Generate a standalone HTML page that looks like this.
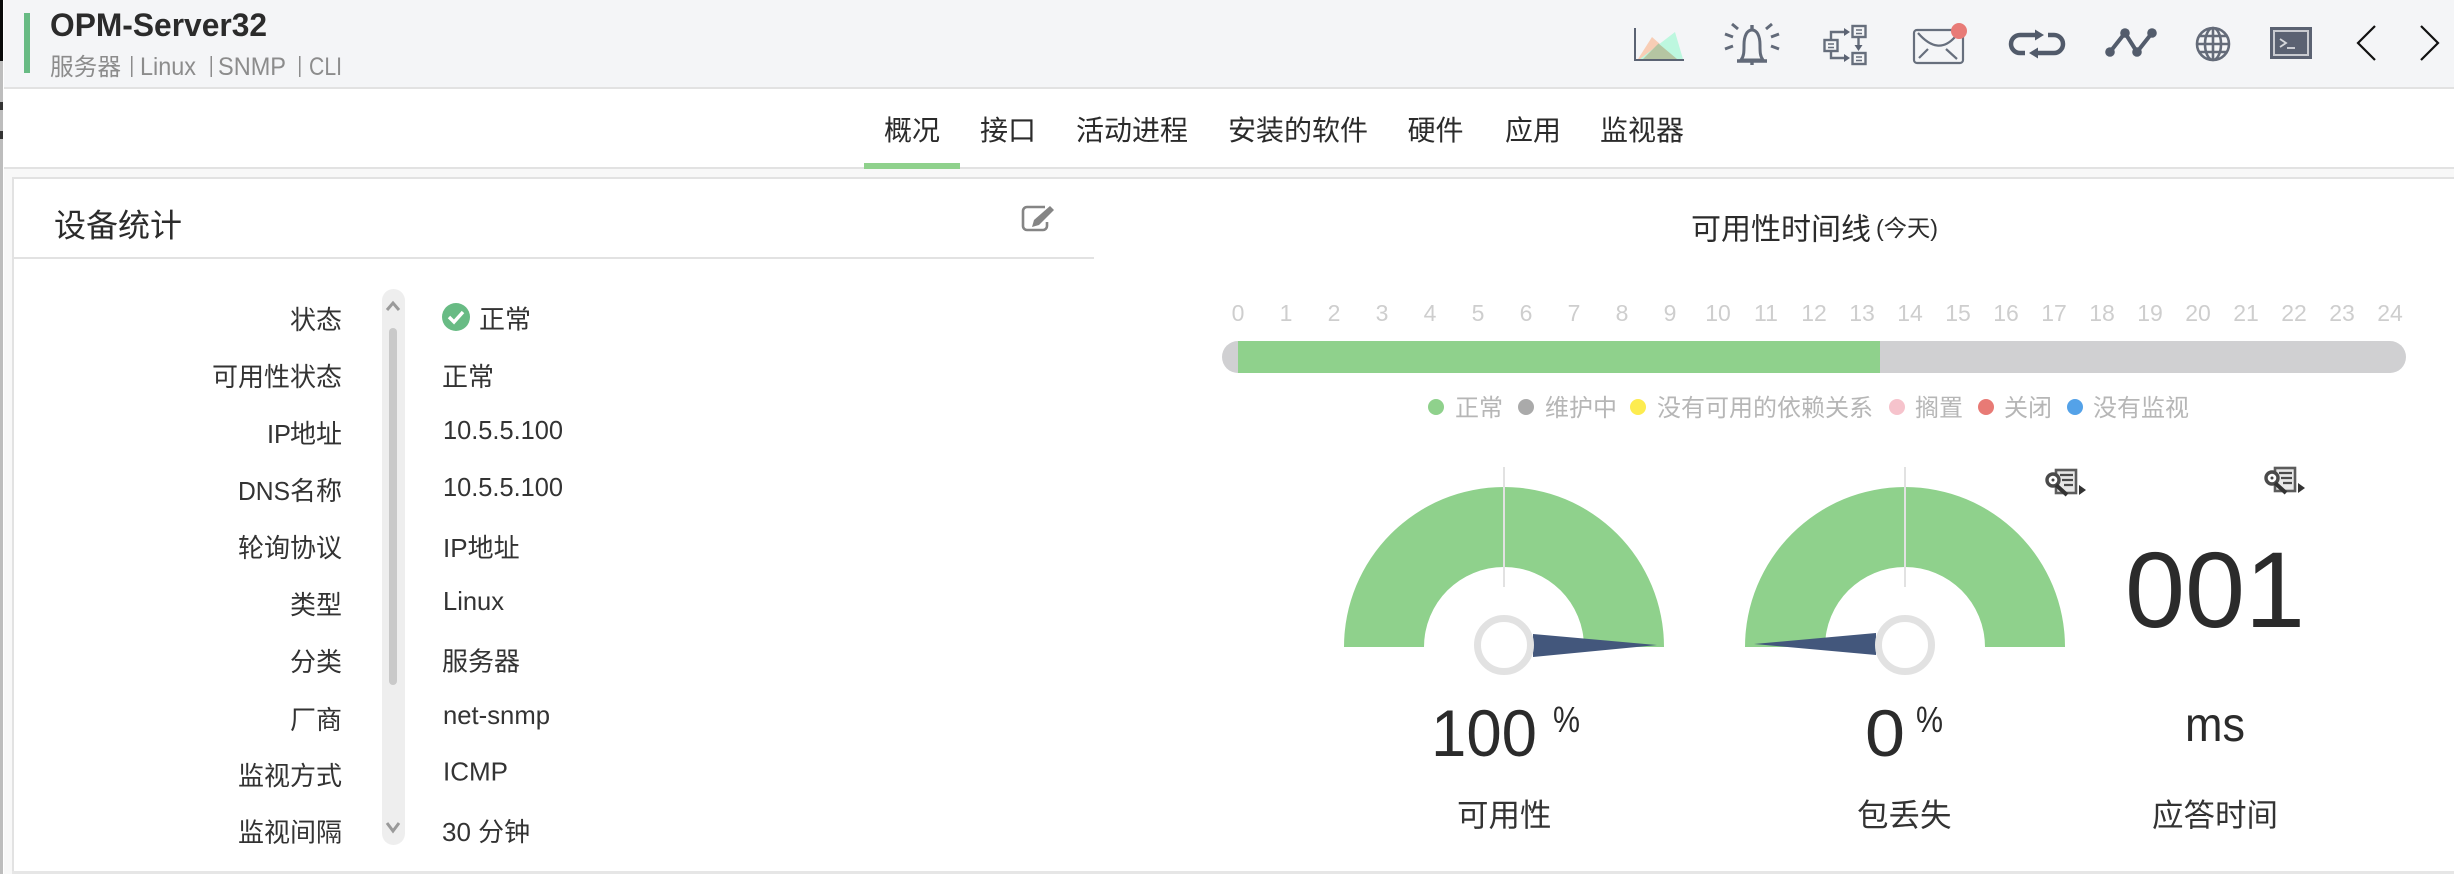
<!DOCTYPE html>
<html lang="zh">
<head>
<meta charset="utf-8">
<title>OPM-Server32</title>
<style>
html,body{margin:0;padding:0;background:#fff;width:2454px;height:874px;overflow:hidden}
svg{display:block;filter:blur(0.35px)}
text{font-family:"Liberation Sans","Noto Sans CJK SC",sans-serif;fill:#2b2b2b}
.lb{font-size:26px;text-anchor:end;fill:#333}
.ls{font-size:26px;fill:#333}
.vl{font-size:26px;fill:#333}
.nv{font-size:28px;fill:#2b2b2b}
.hr{font-size:23px;fill:#cecece;text-anchor:middle}
.lg{font-size:24px;fill:#b6b6b6}
.cap{font-size:31.5px;fill:#333}
.sub{font-size:24px;fill:#8c8c8c}
</style>
</head>
<body>
<svg xmlns="http://www.w3.org/2000/svg" width="2454" height="874" viewBox="0 0 2454 874">
<defs>
<g id="rep">
<rect x="2056" y="470" width="20" height="23" fill="#e8e8e8" stroke="#5c5c5c" stroke-width="2.600"/>
<path d="M2060 475h13M2062 480h11M2064 485h9" stroke="#4a4a4a" stroke-width="2.200" fill="none"/>
<circle cx="2053" cy="480" r="6" fill="#fff" stroke="#4a4a4a" stroke-width="3.400"/>
<circle cx="2053" cy="480" r="1.500" fill="#444"/>
<path d="M2056 485L2067 495" stroke="#333" stroke-width="4"/>
<path d="M2079 485l7 5-7 5z" fill="#333"/>
</g>
</defs>

<!-- page backgrounds -->
<rect width="2454" height="874" fill="#fff"/>
<rect x="4" y="0" width="2450" height="87" fill="#f4f5f7"/>
<rect x="4" y="87" width="2450" height="2" fill="#e2e2e2"/>
<rect x="4" y="167" width="2450" height="2" fill="#e2e2e2"/>
<rect x="4" y="169" width="2450" height="705" fill="#f8f8f8"/>
<rect x="13" y="177" width="2441" height="694" fill="#fff"/>
<rect x="12" y="177" width="2442" height="2" fill="#e2e2e2"/>
<rect x="12" y="177" width="2" height="695" fill="#e2e2e2"/>
<rect x="12" y="871" width="2442" height="3" fill="#e6e6e6"/>
<rect x="13" y="257" width="1081" height="2" fill="#e2e2e2"/>

<!-- left edge strip -->
<rect x="0" y="0" width="1" height="874" fill="#fff"/>
<rect x="0" y="60" width="3" height="814" fill="#bdbdbd"/>
<rect x="0" y="0" width="3" height="61" fill="#0a0a0a"/>
<rect x="0" y="102" width="3" height="8" fill="#333"/>
<rect x="0" y="131" width="3" height="8" fill="#333"/>

<!-- header -->
<rect x="24" y="13" width="6" height="60" fill="#68bb84"/>
<text x="50" y="36" font-size="32" font-weight="700" fill="#232323" textLength="217" lengthAdjust="spacingAndGlyphs">OPM-Server32</text>
<text class="sub" x="50" y="75" textLength="71" lengthAdjust="spacingAndGlyphs">服务器</text>
<rect x="131" y="56" width="1.5" height="21" fill="#8c8c8c"/>
<text class="sub" x="140" y="75" font-size="25" style="font-size:25px" textLength="56" lengthAdjust="spacingAndGlyphs">Linux</text>
<rect x="210.500" y="56" width="1.5" height="21" fill="#8c8c8c"/>
<text class="sub" x="218" y="75" style="font-size:25px" textLength="68" lengthAdjust="spacingAndGlyphs">SNMP</text>
<rect x="299" y="56" width="1.5" height="21" fill="#8c8c8c"/>
<text class="sub" x="309" y="75" style="font-size:25px" textLength="33" lengthAdjust="spacingAndGlyphs">CLI</text>

<!-- header icons -->
<!-- chart -->
<path d="M1638 59L1652 37L1677 59Z" fill="#f8cdb5"/>
<path d="M1640 59L1675 32L1683 59Z" fill="#bdf7df"/>
<path d="M1643 59L1658.500 43.500L1677 59Z" fill="#b5c5a2"/>
<path d="M1635 28V60H1684" fill="none" stroke="#5b6373" stroke-width="2"/>
<!-- bell -->
<g fill="none" stroke="#626a79" stroke-width="3">
<path d="M1741 60c3-4 3-8 3-15c0-9 3-15 8-15s8 6 8 15c0 7 0 11 3 15z"/>
<path d="M1737 61H1767" stroke-width="3.400"/>
<path d="M1752 25V29M1752 61V65" stroke-width="3.400"/>
<path d="M1732 24L1738 29M1772 24L1766 29M1725 34L1733 37M1779 34L1771 37M1725 49L1733 46M1779 49L1771 46"/>
</g>
<!-- flow -->
<g fill="none" stroke="#666e7c" stroke-width="2.400">
<rect x="1852.500" y="26" width="13" height="11"/>
<rect x="1824.500" y="40" width="13" height="11"/>
<rect x="1852.500" y="53" width="13" height="11"/>
<path d="M1856 30h6M1856 33.500h6M1828 44h6M1828 47.500h6M1856 57h6M1856 60.500h6" stroke-width="1.600"/>
<path d="M1831 39V32H1845M1831 52V58H1845M1858.500 38V47"/>
</g>
<path d="M1844 28l6 4-6 4zM1844 54l6 4-6 4zM1854.500 45h8l-4 6z" fill="#5b6373"/>
<!-- mail -->
<g fill="none" stroke="#676f7d" stroke-width="2.200">
<rect x="1914" y="30" width="49" height="33" rx="3"/>
<path d="M1918 33Q1938 56 1955 37"/>
<path d="M1919 58L1928 49M1957 59L1946 49"/>
</g>
<circle cx="1959" cy="31" r="8" fill="#e87b77"/>
<!-- loop -->
<g fill="none" stroke="#515a6a" stroke-width="4.500">
<path d="M2038 35H2020a9 9 0 0 0 0 18H2025"/>
<path d="M2048 35H2054a9 9 0 0 1 0 18H2034"/>
</g>
<path d="M2035 29.500L2044 35L2035 40.500ZM2038 47.500L2029 53L2038 58.500Z" fill="#515a6a"/>
<!-- nodes -->
<path d="M2110 52L2125 33L2137 52L2152 33" fill="none" stroke="#535c6c" stroke-width="4"/>
<circle cx="2110" cy="52" r="4.800" fill="#535c6c"/><circle cx="2125" cy="33" r="4.800" fill="#535c6c"/><circle cx="2137" cy="52" r="4.800" fill="#535c6c"/><circle cx="2152" cy="33" r="4.800" fill="#535c6c"/>
<!-- globe -->
<g fill="none" stroke="#646b79" stroke-width="2.600">
<circle cx="2213" cy="44" r="16"/>
<ellipse cx="2213" cy="44" rx="8" ry="16"/>
<path d="M2213 28V60M2197 44H2229M2199 36H2227M2199 52H2227"/>
</g>
<!-- terminal -->
<rect x="2270" y="27" width="42" height="32" fill="#5b6272"/>
<rect x="2274" y="31" width="34" height="24" fill="none" stroke="#c9cbd0" stroke-width="2"/>
<path d="M2280 39l6 4-6 4" fill="none" stroke="#d6d8dc" stroke-width="1.800"/>
<path d="M2287 48h8" stroke="#d6d8dc" stroke-width="1.800"/>
<!-- chevrons -->
<path d="M2375 26L2358 43L2375 60M2421 26L2438 43L2421 60" fill="none" stroke="#111" stroke-width="2.200"/>

<!-- nav -->
<text class="nv" x="884" y="140">概况</text>
<text class="nv" x="980" y="140">接口</text>
<text class="nv" x="1076" y="140">活动进程</text>
<text class="nv" x="1228" y="140">安装的软件</text>
<text class="nv" x="1407.500" y="140">硬件</text>
<text class="nv" x="1505" y="140">应用</text>
<text class="nv" x="1600" y="140">监视器</text>
<rect x="864" y="163" width="96" height="6" fill="#8fd18c"/>

<!-- panel head -->
<text x="54" y="236.500" font-size="32" fill="#333">设备统计</text>
<g fill="none" stroke="#858585" stroke-width="2.600">
<path d="M1045 207H1027a4 4 0 0 0-4 4V226a4 4 0 0 0 4 4H1043a4 4 0 0 0 4-4V222"/>
</g>
<path d="M1050 206l4 4-15 15-7 2 2-7z" fill="#858585"/>

<!-- rows -->
<text class="lb" x="342" y="329.200">状态</text>
<text class="lb" x="342" y="386.200">可用性状态</text>
<text class="ls" x="267" y="443.200" textLength="24" lengthAdjust="spacingAndGlyphs">IP</text>
<text class="lb" x="342" y="443.200">地址</text>
<text class="ls" x="238" y="500.200" textLength="52" lengthAdjust="spacingAndGlyphs">DNS</text>
<text class="lb" x="342" y="500.200">名称</text>
<text class="lb" x="342" y="557.200">轮询协议</text>
<text class="lb" x="342" y="614.200">类型</text>
<text class="lb" x="342" y="671.200">分类</text>
<text class="lb" x="342" y="729.200">厂商</text>
<text class="lb" x="342" y="785.200">监视方式</text>
<text class="lb" x="342" y="841.500">监视间隔</text>

<!-- scrollbar -->
<rect x="382" y="289" width="23" height="556" rx="11.500" fill="#eeeeee"/>
<rect x="389" y="328" width="8" height="357" rx="4" fill="#c9c9c9"/>
<path d="M387 310L393 303L399 310M387 823L393 831L399 823" fill="none" stroke="#9a9a9a" stroke-width="3"/>

<!-- values -->
<circle cx="456" cy="317" r="14" fill="#68bb84"/>
<path d="M449 317L454 322L463 312" fill="none" stroke="#fff" stroke-width="3.400"/>
<text class="vl" x="479" y="328.500">正常</text>
<text class="vl" x="442" y="386">正常</text>
<text class="vl" x="443" y="439" textLength="120" lengthAdjust="spacingAndGlyphs">10.5.5.100</text>
<text class="vl" x="443" y="496" textLength="120" lengthAdjust="spacingAndGlyphs">10.5.5.100</text>
<text class="vl" x="443" y="557">IP地址</text>
<text class="vl" x="443" y="610" textLength="61" lengthAdjust="spacingAndGlyphs">Linux</text>
<text class="vl" x="442" y="670.500">服务器</text>
<text class="vl" x="443" y="724" textLength="107" lengthAdjust="spacingAndGlyphs">net-snmp</text>
<text class="vl" x="443" y="780.500" textLength="65" lengthAdjust="spacingAndGlyphs">ICMP</text>
<text class="vl" x="442" y="841">30 分钟</text>

<!-- availability -->
<text x="1691" y="239.500" font-size="30" fill="#333">可用性时间线</text>
<text x="1876" y="236" font-size="23" fill="#666" textLength="62" lengthAdjust="spacingAndGlyphs">(今天)</text>

<g>
<text class="hr" x="1238" y="321">0</text><text class="hr" x="1286" y="321">1</text><text class="hr" x="1334" y="321">2</text><text class="hr" x="1382" y="321">3</text><text class="hr" x="1430" y="321">4</text><text class="hr" x="1478" y="321">5</text><text class="hr" x="1526" y="321">6</text><text class="hr" x="1574" y="321">7</text><text class="hr" x="1622" y="321">8</text><text class="hr" x="1670" y="321">9</text><text class="hr" x="1718" y="321">10</text><text class="hr" x="1766" y="321">11</text><text class="hr" x="1814" y="321">12</text><text class="hr" x="1862" y="321">13</text><text class="hr" x="1910" y="321">14</text><text class="hr" x="1958" y="321">15</text><text class="hr" x="2006" y="321">16</text><text class="hr" x="2054" y="321">17</text><text class="hr" x="2102" y="321">18</text><text class="hr" x="2150" y="321">19</text><text class="hr" x="2198" y="321">20</text><text class="hr" x="2246" y="321">21</text><text class="hr" x="2294" y="321">22</text><text class="hr" x="2342" y="321">23</text><text class="hr" x="2390" y="321">24</text>
</g>

<rect x="1222" y="341" width="1184" height="32" rx="16" fill="#d0d0d2"/>
<rect x="1238" y="341" width="642" height="32" fill="#8fd18c"/>

<circle cx="1436" cy="407" r="8" fill="#8fd18c"/>
<text class="lg" x="1455" y="416">正常</text>
<circle cx="1526" cy="407" r="8" fill="#aaaaaa"/>
<text class="lg" x="1545" y="416">维护中</text>
<circle cx="1638" cy="407" r="8" fill="#fdec4f"/>
<text class="lg" x="1657" y="416">没有可用的依赖关系</text>
<circle cx="1897" cy="407" r="8" fill="#f6c3cc"/>
<text class="lg" x="1915" y="416">搁置</text>
<circle cx="1986" cy="407" r="8" fill="#e87a75"/>
<text class="lg" x="2004" y="416">关闭</text>
<circle cx="2075" cy="407" r="8" fill="#54a2e8"/>
<text class="lg" x="2093" y="416">没有监视</text>

<!-- gauge 1 -->
<path d="M1344 647A160 160 0 0 1 1664 647H1584A80 80 0 0 0 1424 647Z" fill="#8fd18c"/>
<rect x="1503" y="467" width="2" height="120" fill="#e2e2e2"/>
<path d="M1533 634L1657 645L1533 657Z" fill="#43577c"/>
<circle cx="1504" cy="645" r="26.500" fill="#fff" stroke="#e2e2e2" stroke-width="7"/>

<!-- gauge 2 -->
<path d="M1745 647A160 160 0 0 1 2065 647H1985A80 80 0 0 0 1825 647Z" fill="#8fd18c"/>
<rect x="1904" y="467" width="2" height="120" fill="#e2e2e2"/>
<path d="M1876 633L1754 644L1876 655Z" fill="#43577c"/>
<circle cx="1905" cy="645" r="26.500" fill="#fff" stroke="#e2e2e2" stroke-width="7"/>

<use href="#rep"/>
<use href="#rep" transform="translate(219,-2)"/>

<!-- values -->
<text x="1431" y="756" font-size="66" fill="#262626" textLength="106" lengthAdjust="spacingAndGlyphs">100</text>
<text x="1553" y="732" font-size="36" fill="#262626" textLength="27" lengthAdjust="spacingAndGlyphs">%</text>
<text x="1865" y="756" font-size="66" fill="#262626" textLength="40" lengthAdjust="spacingAndGlyphs">0</text>
<text x="1916" y="732" font-size="36" fill="#262626" textLength="27" lengthAdjust="spacingAndGlyphs">%</text>
<text class="cap" x="1457" y="826">可用性</text>
<text class="cap" x="1857" y="826">包丢失</text>
<text class="cap" x="2152" y="826">应答时间</text>

<text x="2125" y="627" font-size="108" fill="#262626" textLength="180" lengthAdjust="spacingAndGlyphs">001</text>
<text x="2185" y="741" font-size="48" fill="#262626" textLength="60" lengthAdjust="spacingAndGlyphs">ms</text>
</svg>
</body>
</html>
